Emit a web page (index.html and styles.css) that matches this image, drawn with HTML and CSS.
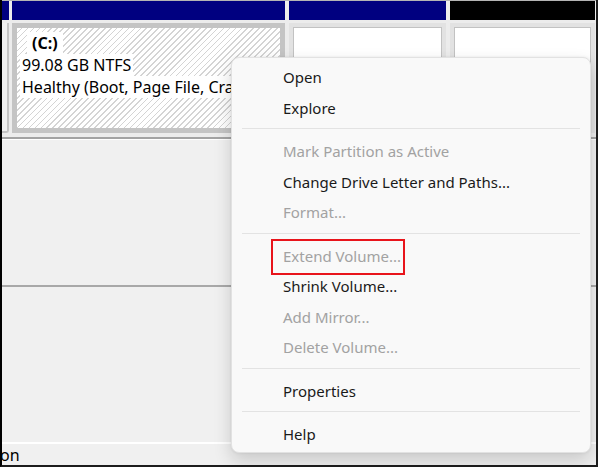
FILE: index.html
```html
<!DOCTYPE html>
<html>
<head>
<meta charset="utf-8">
<link rel="stylesheet" href="styles.css">
</head>
<body>
<div class="window">
  <div class="disk">
    <div class="part part-a"><div class="bar"></div><div class="box box-a"></div></div>
    <div class="part part-c">
      <div class="bar"></div>
      <div class="box box-c">
        <span class="lbl lbl-name">(C:)</span>
        <span class="lbl">99.08 GB NTFS</span>
        <span class="lbl">Healthy (Boot, Page File, Crash Dump, Primary Partition)</span>
      </div>
    </div>
    <div class="part part-d"><div class="bar"></div><div class="box box-d"></div></div>
    <div class="part part-e"><div class="bar bar-black"></div><div class="box box-e"></div></div>
  </div>
  <div class="pane pane-top"></div>
  <div class="pane pane-bottom"></div>
  <div class="status"><span class="status-text">on</span></div>

  <div class="menu">
    <div class="item">Open</div>
    <div class="item">Explore</div>
    <div class="sep"></div>
    <div class="item disabled">Mark Partition as Active</div>
    <div class="item">Change Drive Letter and Paths...</div>
    <div class="item disabled">Format...</div>
    <div class="sep"></div>
    <div class="item disabled item-mark">Extend Volume...<span class="highlight"></span></div>
    <div class="item">Shrink Volume...</div>
    <div class="item disabled">Add Mirror...</div>
    <div class="item disabled">Delete Volume...</div>
    <div class="sep"></div>
    <div class="item">Properties</div>
    <div class="sep"></div>
    <div class="item">Help</div>
  </div>
</div>
</body>
</html>
```
FILE: styles.css
```css
html, body {
  margin: 0;
  padding: 0;
  background: #ffffff;
}

body {
  font-family: "Noto Sans", "Open Sans", sans-serif;
  color: #1b1b1b;
}

.window {
  position: relative;
  width: 594px;
  height: 465px;
  border-left: 2px solid #000;
  border-right: 2px solid #1c1c1c;
  border-bottom: 2px solid #1c1c1c;
  background: #f0f0f0;
  display: flex;
  flex-direction: column;
  overflow: hidden;
}

/* ---------- disk strip ---------- */
.disk {
  height: 136px;
  flex: none;
  display: flex;
  border-top: 1px solid #b4b4b4;
  background: #ececec;
}

.part {
  display: flex;
  flex-direction: column;
  gap: 3px;
}

.part-a { width: 7px; margin-right: 3px; }
.part-c { width: 273px; margin-right: 4px; }
.part-d { width: 157px; margin-right: 4px; }
.part-e { flex: 1; margin-right: 1px; }

.bar {
  height: 19px;
  background: #000080;
}

.bar-black { background: #000; }

.box {
  height: 110px;
  box-sizing: border-box;
}

.box-a {
  background: #f0f0f0;
  border-right: 2px solid #c4c4c4;
  border-bottom: 2px solid #c4c4c4;
  border-bottom-right-radius: 3px;
}

.box-c {
  border: 5px solid #c4c4c4;
  background-color: #fff;
  background-image: repeating-linear-gradient(135deg, #ffffff 0px, #ffffff 3px, #d4d4d4 3px, #d4d4d4 4.2px);
  padding: 4px 0 0 3px;
  overflow: hidden;
  white-space: nowrap;
  font-size: 16px;
  line-height: 22px;
  color: #000;
}

.lbl {
  display: block;
  width: fit-content;
  background: #fff;
  padding: 0 2px;
}

.lbl-name {
  font-weight: bold;
  margin-left: 7px;
  padding: 0 5px;
}

.box-d, .box-e {
  background: #fff;
  border: 4px solid #e2e2e2;
  box-shadow: inset 0 0 0 1px #c2c2c2;
}

/* ---------- panes ---------- */
.pane {
  flex: none;
  box-sizing: border-box;
}

.pane-top {
  height: 148px;
  border-top: 2px solid #a3a3a3;
  box-shadow: inset 0 1px 0 #ffffff;
}

.pane-bottom {
  height: 157px;
  border-top: 2px solid #a8a8a8;
}

.status {
  flex: 1;
  border-top: 2px solid #ffffff;
  background: #f0f0f0;
  font-size: 16px;
  line-height: 22px;
  color: #000;
  overflow: hidden;
  white-space: nowrap;
}

.status-text {
  display: block;
  margin-left: -2px;
}

/* ---------- context menu ---------- */
.menu {
  position: absolute;
  left: 229px;
  top: 57px;
  width: 358px;
  padding: 4px 0 2px;
  background: #f9f9f9;
  border: 1px solid #e2e2e2;
  border-radius: 8px;
  box-shadow: 0 8px 18px rgba(0, 0, 0, 0.16), 0 0 3px rgba(0, 0, 0, 0.08);
  font-size: 15px;
}

.item {
  position: relative;
  height: 30.5px;
  display: flex;
  align-items: center;
  padding-left: 51px;
  color: #1a1a1a;
  white-space: nowrap;
}

.item.disabled {
  color: #a2a2a2;
}

.sep {
  height: 1px;
  background: #e3e3e3;
  margin: 5px 10px 7px;
}

.highlight {
  position: absolute;
  left: 39px;
  top: -2px;
  width: 134px;
  height: 36px;
  box-sizing: border-box;
  border: 2px solid #e8141b;
}
```
